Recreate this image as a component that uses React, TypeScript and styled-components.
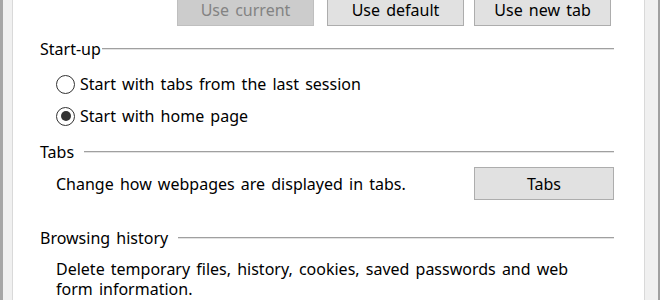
import React from "react";
import styled, { createGlobalStyle, css } from "styled-components";

const Global = createGlobalStyle`
  html, body { margin: 0; padding: 0; overflow: hidden; }
  body { font-family: "Noto Sans", "Liberation Sans", sans-serif; }
`;

const Window = styled.div`
  width: 660px;
  height: 300px;
  box-sizing: border-box;
  display: flex;
  background: #f0f0f0;
  border-left: 3px solid #a6a6a6;
  border-right: 2px solid #a0a0a0;
  padding: 0 13px 0 9px;
  overflow: hidden;
`;

const Panel = styled.div`
  flex: 1;
  background: #ffffff;
  border-left: 1px solid #d9d9d9;
  border-right: 1px solid #d9d9d9;
  padding: 0 30px 0 27px;
  display: flex;
  flex-direction: column;
  color: #000;
  font-size: 16px;
  word-spacing: 2px;
`;

const ButtonRow = styled.div`
  display: flex;
  justify-content: flex-end;
  margin-right: 3px;
`;

const Button = styled.button<{ $w?: number; $gap?: number; $cut?: boolean }>`
  box-sizing: border-box;
  width: ${(p) => p.$w ?? 137}px;
  height: 33px;
  margin-left: ${(p) => p.$gap ?? 0}px;
  background: #e1e1e1;
  border: 1px solid #adadad;
  border-radius: 0;
  font-family: inherit;
  font-size: 16px;
  word-spacing: 2px;
  line-height: 20px;
  color: #000;
  padding: 0;
  ${(p) =>
    p.$cut &&
    css`
      height: 26px;
      border-top-width: 0;
      padding-bottom: 6px;
    `}
  &:disabled {
    background: #cccccc;
    border-color: #bfbfbf;
    color: #838383;
  }
`;

const Heading = styled.div<{ $top: number; $gap: number }>`
  display: flex;
  align-items: center;
  margin-top: ${(p) => p.$top}px;
  height: 20px;
  line-height: 20px;
  &::after {
    content: "";
    flex: 1;
    height: 0;
    border-top: 1px solid #a0a0a0;
    border-bottom: 1px solid #e3e3e3;
    margin-left: ${(p) => p.$gap}px;
  }
`;

const RadioList = styled.div`
  display: flex;
  flex-direction: column;
  gap: 12px;
  margin-top: 15px;
  padding-left: 16px;
`;

const RadioRow = styled.label`
  display: flex;
  align-items: center;
  gap: 5px;
  height: 20px;
  line-height: 20px;
`;

const RadioCircle = styled.span<{ $checked?: boolean }>`
  box-sizing: border-box;
  width: 19px;
  height: 19px;
  border: 1px solid #333333;
  border-radius: 50%;
  background: #fff;
  display: flex;
  align-items: center;
  justify-content: center;
  &::after {
    content: "";
    width: 10px;
    height: 10px;
    border-radius: 50%;
    background: ${(p) => (p.$checked ? "#333333" : "transparent")};
  }
`;

const TabsRow = styled.div`
  display: flex;
  align-items: center;
  justify-content: space-between;
  margin-top: 5px;
  padding-left: 16px;
`;

const Para = styled.div<{ $top: number }>`
  margin-top: ${(p) => p.$top}px;
  padding-left: 16px;
  line-height: 20px;
  max-width: 540px;
`;

export default function App() {
  return (
    <>
      <Global />
      <Window>
        <Panel>
          <ButtonRow>
            <Button $cut disabled>Use current</Button>
            <Button $cut $gap={13}>Use default</Button>
            <Button $cut $gap={10}>Use new tab</Button>
          </ButtonRow>
          <Heading $top={13} $gap={1}>Start-up</Heading>
          <RadioList>
            <RadioRow>
              <RadioCircle />
              Start with tabs from the last session
            </RadioRow>
            <RadioRow>
              <RadioCircle $checked />
              Start with home page
            </RadioRow>
          </RadioList>
          <Heading $top={16} $gap={10}>Tabs</Heading>
          <TabsRow>
            <span>Change how webpages are displayed in tabs.</span>
            <Button $w={140}>Tabs</Button>
          </TabsRow>
          <Heading $top={28} $gap={10}>Browsing history</Heading>
          <Para $top={11}>
            Delete temporary files, history, cookies, saved passwords and web
            form information.
          </Para>
        </Panel>
      </Window>
    </>
  );
}
